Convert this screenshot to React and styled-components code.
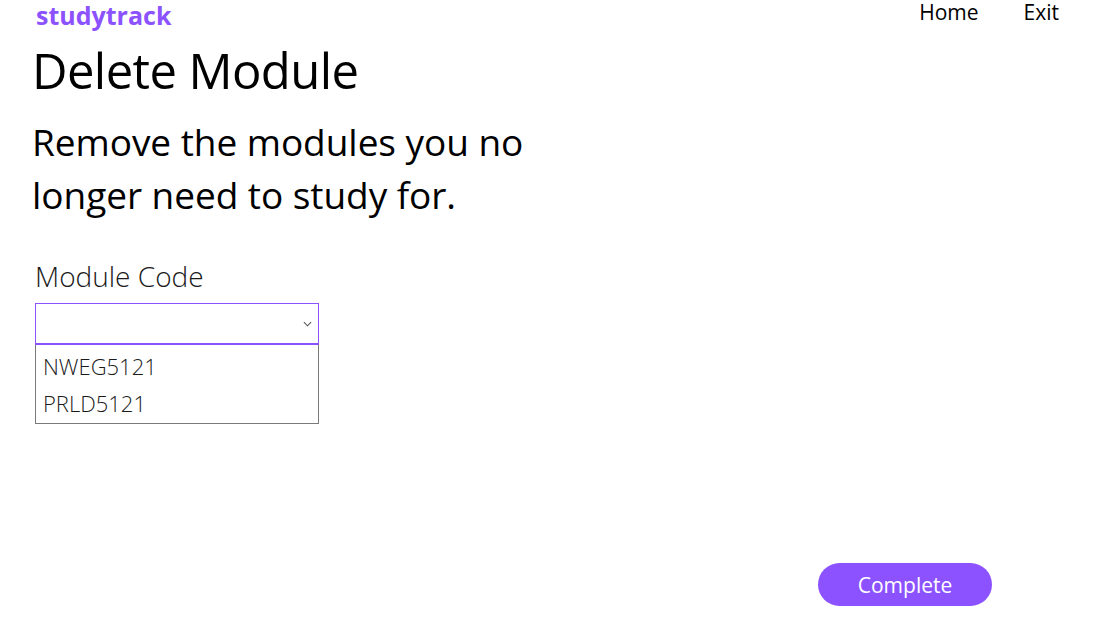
import React, { useState } from 'react';
import styled, { createGlobalStyle } from 'styled-components';

const PURPLE = '#8c52ff';

const GlobalStyle = createGlobalStyle`
  body {
    margin: 0;
    padding: 0;
    font-family: 'Open Sans', 'Noto Sans', sans-serif;
    color: #000;
    background: #fff;
  }
`;

const MODULES = ['NWEG5121', 'PRLD5121'];

function App() {
  const [selected, setSelected] = useState('');
  const [open, setOpen] = useState(true);

  return (
    <>
      <GlobalStyle />
      <Page>
        <TopBar>
          <Logo>studytrack</Logo>
          <Nav>
            <NavLink href="#">Home</NavLink>
            <NavLink href="#">Exit</NavLink>
          </Nav>
        </TopBar>

        <Content>
          <Title>Delete Module</Title>
          <Lead>Remove the modules you no longer need to study for.</Lead>

          <Field>
            <Label>Module Code</Label>
            <SelectWrap>
              <SelectBox onClick={() => setOpen(!open)}>
                <span>{selected}</span>
                <Chevron viewBox="0 0 10 6" width="9" height="6">
                  <path d="M1 1l4 4 4-4" fill="none" stroke="#555" strokeWidth="1.2" />
                </Chevron>
              </SelectBox>
              {open && (
                <OptionList>
                  {MODULES.map((m) => (
                    <Option key={m} onClick={() => { setSelected(m); setOpen(false); }}>
                      {m}
                    </Option>
                  ))}
                </OptionList>
              )}
            </SelectWrap>
          </Field>
        </Content>

        <Footer>
          <CompleteButton>Complete</CompleteButton>
        </Footer>
      </Page>
    </>
  );
}

const Page = styled.div`
  min-height: 100vh;
  display: flex;
  flex-direction: column;
  box-sizing: border-box;
`;

const TopBar = styled.header`
  display: flex;
  justify-content: space-between;
  align-items: flex-start;
  padding: 0 36px 0 36px;
`;

const Logo = styled.div`
  color: ${PURPLE};
  font-size: 25px;
  font-weight: 700;
  line-height: 30px;
`;

const Nav = styled.nav`
  display: flex;
  gap: 45px;
`;

const NavLink = styled.a`
  color: #000;
  text-decoration: none;
  font-size: 21px;
  line-height: 24px;
`;

const Content = styled.main`
  padding: 0 32px;
  flex: 1;
`;

const Title = styled.h1`
  margin: 9px 0 0;
  font-size: 49px;
  font-weight: 400;
  line-height: 62px;
  letter-spacing: -0.6px;
`;

const Lead = styled.p`
  margin: 14px 0 0;
  width: 545px;
  font-size: 37px;
  font-weight: 400;
  line-height: 53px;
  letter-spacing: -0.05px;
`;

const Field = styled.div`
  margin-top: 37px;
  padding-left: 3px;
  width: 284px;
`;

const Label = styled.div`
  font-size: 28px;
  line-height: 36px;
  color: #1a1a1a;
  font-weight: 300;
`;

const SelectWrap = styled.div`
  position: relative;
  margin-top: 9px;
`;

const SelectBox = styled.div`
  height: 42px;
  box-sizing: border-box;
  border: 1px solid ${PURPLE};
  border-bottom-width: 2px;
  display: flex;
  align-items: center;
  justify-content: space-between;
  padding: 0 6px 0 8px;
  cursor: pointer;
`;

const Chevron = styled.svg`
  display: block;
`;

const OptionList = styled.ul`
  position: absolute;
  top: 42px;
  left: 0;
  right: 0;
  margin: 0;
  padding: 3px 0 1px;
  list-style: none;
  border: 1px solid #7a7a7a;
  border-top: none;
  background: #fff;
`;

const Option = styled.li`
  padding: 0 7px;
  font-size: 22px;
  line-height: 37px;
  font-weight: 300;
  color: #1a1a1a;
  cursor: pointer;
`;

const Footer = styled.footer`
  display: flex;
  justify-content: flex-end;
  padding: 0 103px 25px 0;
`;

const CompleteButton = styled.button`
  width: 174px;
  height: 43px;
  border: none;
  border-radius: 22px;
  background: ${PURPLE};
  color: #fff;
  font-family: inherit;
  font-size: 21px;
  cursor: pointer;
`;

export default App;
